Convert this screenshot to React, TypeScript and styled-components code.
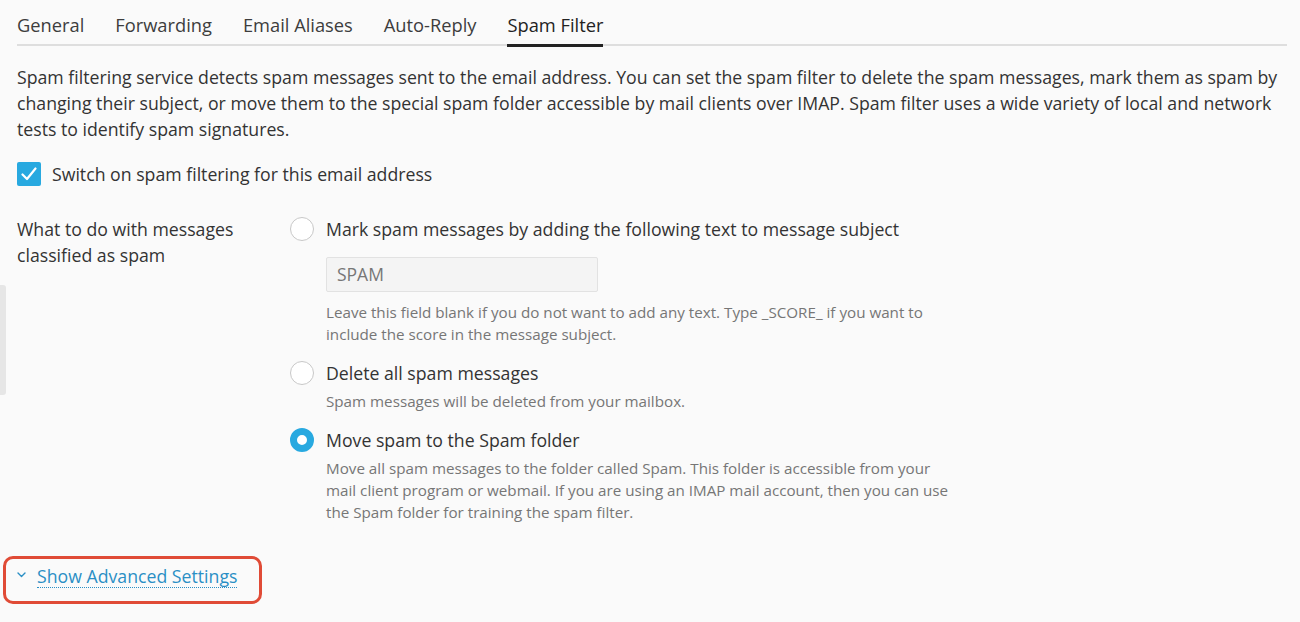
import React from "react";
import styled, { createGlobalStyle } from "styled-components";

const Global = createGlobalStyle`
  html, body { margin: 0; padding: 0; background: #fafafa; }
  body {
    font-family: "Open Sans", "Noto Sans", sans-serif;
    color: #333;
    -webkit-font-smoothing: antialiased;
  }
  * { box-sizing: border-box; }
`;

const Page = styled.div`
  position: relative;
  min-height: 622px;
  padding: 0 13px 0 17px;
`;

const SideHandle = styled.div`
  position: absolute;
  left: 0;
  top: 285px;
  width: 6px;
  height: 110px;
  background: #e6e6e6;
  border-radius: 0 3px 3px 0;
`;

const TabList = styled.div`
  display: flex;
  gap: 31px;
  border-bottom: 2px solid #dedede;
`;

const Tab = styled.div<{ $active?: boolean }>`
  font-size: 18.3px;
  line-height: 24px;
  padding: 13px 0 7px;
  margin-bottom: -3px;
  color: ${(p) => (p.$active ? "#222" : "#3d3d3d")};
  border-bottom: 3px solid ${(p) => (p.$active ? "#222" : "transparent")};
`;

const Intro = styled.p`
  margin: 18px 0 0;
  font-size: 17.7px;
  line-height: 26px;
  color: #333;
`;

const CheckRow = styled.label`
  display: flex;
  align-items: center;
  gap: 11px;
  margin-top: 20px;
  font-size: 17.7px;
  line-height: 24px;
`;

const CheckBox = styled.span`
  width: 24px;
  height: 24px;
  border-radius: 2px;
  background: #28a9e0;
  display: flex;
  align-items: center;
  justify-content: center;
  flex: none;
`;

const FormRow = styled.div`
  display: grid;
  grid-template-columns: 273px 1fr;
  margin-top: 30px;
`;

const FieldLabel = styled.div`
  font-size: 17.7px;
  line-height: 26px;
  color: #333;
`;

const Options = styled.div`
  display: flex;
  flex-direction: column;
  gap: 15px;
`;

const Option = styled.div`
  display: grid;
  grid-template-columns: 24px 1fr;
  column-gap: 12px;
`;

const Radio = styled.span<{ $checked?: boolean }>`
  width: 24px;
  height: 24px;
  margin-top: 1px;
  border-radius: 50%;
  background: #fff;
  border: ${(p) => (p.$checked ? "7px solid #28a9e0" : "1px solid #c8c8c8")};
`;

const OptionBody = styled.div`
  display: flex;
  flex-direction: column;
`;

const OptionLabel = styled.div`
  font-size: 17.7px;
  line-height: 26px;
  color: #333;
`;

const TextInput = styled.div`
  margin-top: 15px;
  width: 272px;
  height: 35px;
  background: #f4f4f4;
  border: 1px solid #e2e2e2;
  border-radius: 2px;
  padding: 0 10px;
  font-size: 17.5px;
  line-height: 33px;
  color: #777;
`;

const Help = styled.div<{ $afterInput?: boolean }>`
  margin-top: ${(p) => (p.$afterInput ? "9px" : "4px")};
  font-size: 15.2px;
  line-height: 22px;
  color: #767676;
  max-width: 630px;
`;

const AdvancedBox = styled.div`
  display: inline-flex;
  align-items: flex-start;
  margin: 33px 0 0 -14px;
  border: 3px solid #e04b36;
  border-radius: 10px;
  padding: 6px 22px 13px 11px;
  gap: 11px;
`;

const Chevron = styled.span`
  display: flex;
  padding-top: 7px;
`;

const AdvancedLink = styled.a`
  font-size: 17.7px;
  line-height: 22px;
  color: #2a8fc5;
  border-bottom: 1px dotted #2a8fc5;
  text-decoration: none;
  cursor: pointer;
`;

const tabs = ["General", "Forwarding", "Email Aliases", "Auto-Reply", "Spam Filter"];

export default function App() {
  return (
    <>
      <Global />
      <Page>
        <SideHandle />
        <TabList>
          {tabs.map((t) => (
            <Tab key={t} $active={t === "Spam Filter"}>
              {t}
            </Tab>
          ))}
        </TabList>
        <Intro>
          Spam filtering service detects spam messages sent to the email address. You can set the spam filter to delete
          the spam messages, mark them as spam by changing their subject, or move them to the special spam folder
          accessible by mail clients over IMAP. Spam filter uses a wide variety of local and network tests to identify
          spam signatures.
        </Intro>
        <CheckRow>
          <CheckBox>
            <svg width="16" height="14" viewBox="0 0 16 14" fill="none">
              <path d="M1.5 7.5 L6 12 L14.5 1.5" stroke="#fff" strokeWidth="2.2" strokeLinecap="round" strokeLinejoin="round" />
            </svg>
          </CheckBox>
          Switch on spam filtering for this email address
        </CheckRow>
        <FormRow>
          <FieldLabel>
            What to do with messages
            <br />
            classified as spam
          </FieldLabel>
          <Options>
            <Option>
              <Radio />
              <OptionBody>
                <OptionLabel>Mark spam messages by adding the following text to message subject</OptionLabel>
                <TextInput>SPAM</TextInput>
                <Help $afterInput>
                  Leave this field blank if you do not want to add any text. Type _SCORE_ if you want to include the
                  score in the message subject.
                </Help>
              </OptionBody>
            </Option>
            <Option>
              <Radio />
              <OptionBody>
                <OptionLabel>Delete all spam messages</OptionLabel>
                <Help>Spam messages will be deleted from your mailbox.</Help>
              </OptionBody>
            </Option>
            <Option>
              <Radio $checked />
              <OptionBody>
                <OptionLabel>Move spam to the Spam folder</OptionLabel>
                <Help>
                  Move all spam messages to the folder called Spam. This folder is accessible from your mail client
                  program or webmail. If you are using an IMAP mail account, then you can use the Spam folder for
                  training the spam filter.
                </Help>
              </OptionBody>
            </Option>
          </Options>
        </FormRow>
        <AdvancedBox>
          <Chevron>
            <svg width="9" height="6" viewBox="0 0 9 6" fill="none">
              <path d="M1 1 L4.5 4.5 L8 1" stroke="#2a8fc5" strokeWidth="1.4" strokeLinecap="round" strokeLinejoin="round" />
            </svg>
          </Chevron>
          <AdvancedLink>Show Advanced Settings</AdvancedLink>
        </AdvancedBox>
      </Page>
    </>
  );
}
